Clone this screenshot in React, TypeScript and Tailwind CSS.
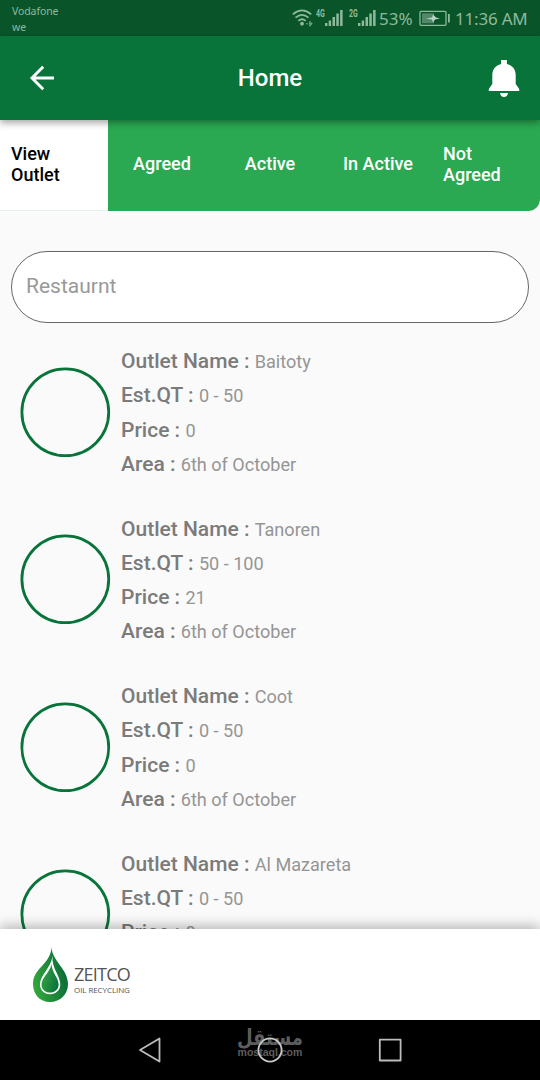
import React from "react";

type Outlet = { name: string; quantity: string; price: string; area: string };

const outlets: Outlet[] = [
  { name: "Baitoty", quantity: "0 - 50", price: "0", area: "6th of October" },
  { name: "Tanoren", quantity: "50 - 100", price: "21", area: "6th of October" },
  { name: "Coot", quantity: "0 - 50", price: "0", area: "6th of October" },
  { name: "Al Mazareta", quantity: "0 - 50", price: "0", area: "6th of October" },
];

function WifiIcon() {
  return (
    <svg className="mt-[9px] h-[18px] w-[21px]" viewBox="0 0 21 18" fill="none" stroke="#8fb99d" strokeWidth="1.7">
      <path d="M.8 5.3Q10 -2.6 19.2 5.3M3.5 8.7Q10 3 16.5 8.7M6.3 11.8Q10 8.7 13.7 11.8" />
      <circle cx="10" cy="14.7" r="1.9" fill="#8fb99d" stroke="none" />
      <path d="M14 14.8h2M17.2 14.8h3M17.8 12.3l2.2 2.5-2.2 2.5z" strokeWidth="0.8" />
    </svg>
  );
}

function Signal({ label }: { label: string }) {
  return (
    <div className="flex">
      <span className="mt-[8px] w-[9px] whitespace-nowrap font-['Roboto',sans-serif] text-[10px] leading-[11px] font-bold">
        <span className="inline-block origin-left scale-x-[0.7]">{label}</span>
      </span>
      <svg className="mt-[9px] h-[18px] w-[18px]" viewBox="0 0 18 18" fill="#8fb99d">
        <path d="M0 14h2.4v3H0zM3.7 11.5h2.4V17H3.7zM7.5 8h2.5v9H7.5zM11.3 4.5h2.5V17h-2.5zM15.1 1h2.5v16h-2.5z" />
      </svg>
    </div>
  );
}

function StatusBar() {
  return (
    <div className="flex h-9 justify-between bg-[#095429] font-['Noto_Sans',sans-serif] text-[#8fb99d]">
      <div className="pt-[3px] pl-3 text-[10.5px] leading-[16px] tracking-[-0.1px]">
        <div>Vodafone</div>
        <div>we</div>
      </div>
      <div className="flex pr-3">
        <WifiIcon />
        <div className="ml-[3px]"><Signal label="4G" /></div>
        <div className="ml-[6px]"><Signal label="2G" /></div>
        <span className="mt-[7px] ml-[3px] w-[36px] text-[17px] leading-6 whitespace-nowrap">53%</span>
        <svg className="mt-[10px] ml-[4px] h-[17px] w-[32px]" viewBox="0 0 32 17">
          <rect x="1" y="1.3" width="26" height="14" rx="1" fill="none" stroke="#8fb99d" strokeWidth="1.3" />
          <path d="M3 3.3h12v10H3z" fill="#52876a" />
          <path d="m7 8.5 6-1 1-3 3 3 4 1-5 1-2 3-1-3z" fill="#b8d6c2" />
          <path d="M29 4h1.8v8.5H29z" fill="#8fb99d" />
        </svg>
        <span className="mt-[7px] ml-[4px] w-[73px] text-[17px] leading-6 tracking-[-0.2px] whitespace-nowrap">11:36 AM</span>
      </div>
    </div>
  );
}

function AppBar() {
  return (
    <header className="relative z-10 grid h-[84px] grid-cols-[1fr_auto_1fr] items-center bg-[#08743a] shadow-[0_3px_7px_rgba(0,0,0,0.35)]">
      <svg className="ml-[29px] h-[26px] w-[26px]" viewBox="0 0 26 26" fill="none" stroke="white" strokeWidth="2.9">
        <path d="M25 13H3M14.2 1.8 3 13l11.2 11.2" />
      </svg>
      <h1 className="font-['Roboto',sans-serif] text-[24px] leading-7 font-medium text-white">Home</h1>
      <svg className="mr-[20px] h-[38px] w-[32px] justify-self-end" viewBox="0 0 32 38" fill="white">
        <path d="M13.1 1h5.8v4C24.6 6.4 27.7 10.5 27.7 16v9l3.5 5v2H.8v-2l3.5-5v-9C4.3 10.5 7.4 6.4 13.1 5zM12 34h8c-.4 2.5-1.7 4-4 4s-3.6-1.5-4-4z" />
      </svg>
    </header>
  );
}

function Tabs() {
  return (
    <nav className="grid h-[91px] shrink-0 grid-cols-5 overflow-hidden rounded-br-[12px] bg-[#2aa952] pb-[4px] font-['Roboto',sans-serif] text-[18px] leading-[21px] font-medium text-white">
      <div className="mb-[-4px] flex items-center border-b border-[#e5f0ee] bg-white pb-[3px] pl-[11px] text-black">View<br />Outlet</div>
      <div className="flex items-center justify-center">Agreed</div>
      <div className="flex items-center justify-center">Active</div>
      <div className="flex items-center justify-center">In Active</div>
      <div className="flex items-center pl-[11px]">Not<br />Agreed</div>
    </nav>
  );
}

function Field({ label, value }: { label: string; value: string }) {
  return (
    <div className="h-[34.3px] text-[18.1px] leading-[34px] whitespace-nowrap text-[#959595]">
      <span className="text-[21px] font-medium text-[#7b7b7b]">{label} : </span>
      {value}
    </div>
  );
}

function OutletRow({ outlet }: { outlet: Outlet }) {
  return (
    <article className="flex h-[167.6px] shrink-0 pl-5">
      <svg className="mt-[22.5px] h-[91px] w-[91px]" viewBox="0 0 91 91" fill="none" stroke="#08743a" strokeWidth="2.8">
        <circle cx="45.3" cy="45.3" r="43.4" />
      </svg>
      <div className="ml-[10px] font-['Roboto',sans-serif]">
        <Field label="Outlet Name" value={outlet.name} />
        <Field label="Est.QT" value={outlet.quantity} />
        <Field label="Price" value={outlet.price} />
        <Field label="Area" value={outlet.area} />
      </div>
    </article>
  );
}

function Footer() {
  return (
    <footer className="relative z-10 flex h-[91px] bg-white shadow-[0_-3px_12px_rgba(0,0,0,0.28)]">
      <svg className="mt-[17px] ml-[32px] h-[57px] w-[37px]" viewBox="0 0 37 57">
        <defs>
          <linearGradient id="drop" x1="0" y1=".8" x2="1" y2=".5">
            <stop stopColor="#36aa3e" />
            <stop offset="1" stopColor="#096a38" />
          </linearGradient>
          <linearGradient id="core" x1="0" y1=".3" x2="1" y2=".7">
            <stop stopColor="#35a346" />
            <stop offset="1" stopColor="#07723a" />
          </linearGradient>
        </defs>
        <path d="M19.5 1C20 15 36 23 36 38c0 10-7.5 18-18 18S1 48 1 38C1 22 19 18 19.5 1z" fill="url(#drop)" />
        <path d="M20.5 10C19 22 8 29 8 38.5c0 5.8 4.4 9.8 10 9.8s10.3-4 10.3-9.8c0-9-8.8-16-7.8-28.5z" fill="white" />
        <path d="M19.5 18c-1.2 8-10 13.600-10 20.500 0 4.700 3.600 8.100 8.500 8.100s8.600-3.400 8.600-8.100c0-6.800-6.900-12-7.100-20.500z" fill="url(#core)" />
      </svg>
      <div className="mt-[34px] ml-[5px] font-['Open_Sans',sans-serif] text-[#555]">
        <div className="text-[18px] leading-[23px] tracking-[-0.75px]">ZEITCO</div>
        <div className="text-[8px] leading-[8px] tracking-[-0.08px]">OIL RECYCLING</div>
      </div>
    </footer>
  );
}

function NavigationBar() {
  return (
    <div className="relative grid h-[60px] grid-cols-[120px_120px_120px] justify-center bg-black">
      <div className="absolute inset-x-0 top-[5px] text-center text-[#5d5d5d]">
        <div className="scale-x-[0.82] font-['DejaVu_Sans',sans-serif] text-[22px] leading-[25px] font-bold" dir="rtl" lang="ar">مستقل</div>
        <div className="mt-[-3px] font-['Liberation_Sans',sans-serif] text-[10.5px] leading-[11px] font-bold">mostaql.com</div>
      </div>
      <svg className="relative h-[60px] w-[120px]" viewBox="0 0 120 60" fill="none" stroke="#bcbcbc" strokeWidth="1.8" strokeLinejoin="round"><path d="M69.5 18.500v23L50 30z" /></svg>
      <svg className="relative h-[60px] w-[120px]" viewBox="0 0 120 60" fill="none" stroke="#c8c8c8" strokeWidth="1.8"><circle cx="60" cy="30" r="11.6" /></svg>
      <svg className="relative h-[60px] w-[120px]" viewBox="0 0 120 60" fill="none" stroke="#bcbcbc" strokeWidth="1.8" strokeLinejoin="round"><path d="M49.8 19.7h20.8v20.8H49.8z" /></svg>
    </div>
  );
}

export default function App() {
  return (
    <div className="flex h-[1080px] w-[540px] flex-col overflow-hidden bg-[#fafafa]">
      <StatusBar />
      <AppBar />
      <main className="flex min-h-0 flex-1 flex-col overflow-hidden">
        <Tabs />
        <input
          aria-label="Restaurant"
          placeholder="Restaurnt"
          className="mt-10 ml-[11px] h-[72px] w-[518px] shrink-0 rounded-full border-[1.5px] border-[#666] bg-white px-[14px] pb-[2px] font-['Roboto',sans-serif] text-[21px] outline-none placeholder:text-[#999]"
        />
        <section className="mt-[21px]">
          {outlets.map((outlet) => <OutletRow key={outlet.name} outlet={outlet} />)}
        </section>
      </main>
      <Footer />
      <NavigationBar />
    </div>
  );
}
